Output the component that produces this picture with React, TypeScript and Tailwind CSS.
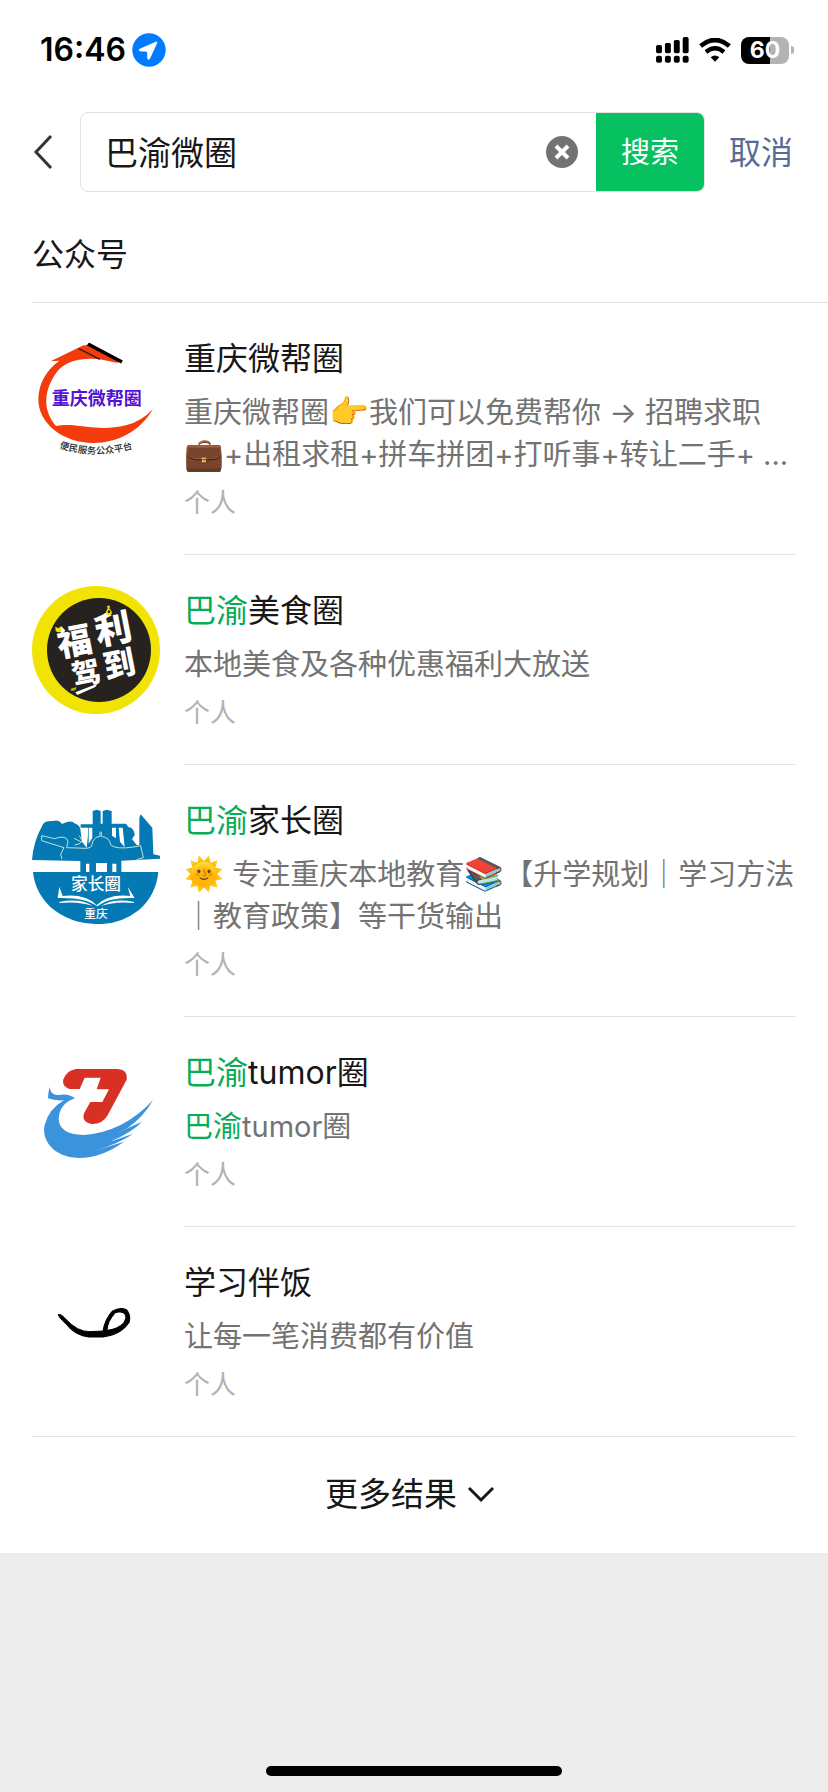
import { useState, type ReactNode } from "react";

function SignalIcon() {
  return (
    <svg viewBox="0 0 100 79" className="w-[33px] h-[26px]" aria-hidden="true">
      <rect x="0" y="24" width="18" height="25" rx="5" />
      <rect x="27" y="18" width="18" height="31" rx="5" />
      <rect x="54" y="9" width="18" height="40" rx="5" />
      <rect x="81" y="0" width="18" height="49" rx="5" />
      <rect x="0" y="57" width="18" height="21" rx="6" />
      <rect x="27" y="57" width="18" height="21" rx="6" />
      <rect x="54" y="57" width="18" height="21" rx="6" />
      <rect x="81" y="57" width="18" height="21" rx="6" />
    </svg>
  );
}

function WifiIcon() {
  return (
    <svg viewBox="0 0 96 72" className="w-8 h-6" aria-hidden="true">
      <path d="M5 24Q48-12 91 24" fill="none" stroke="#000" strokeWidth="14" />
      <path d="M21 42Q48 20 75 42" fill="none" stroke="#000" strokeWidth="13" />
      <path d="M35 58Q48 47 61 58L48 71Z" />
    </svg>
  );
}

function LocationIcon() {
  return (
    <svg viewBox="0 0 102 102" className="w-[34px] h-[34px]" aria-hidden="true">
      <circle cx="51" cy="51" r="50" fill="#007aff" />
      <path
        d="M72 27L22 49Q20 53 24 54L46 55L47 77Q49 82 53 77L75 29Q75 26 72 27Z"
        fill="#fff"
        stroke="#fff"
        strokeWidth="2"
        strokeLinejoin="round"
      />
    </svg>
  );
}

function Battery() {
  return (
    <div className="flex items-center gap-[2px]">
      <div className="flex h-[27px] w-12 items-center justify-center rounded-lg bg-[linear-gradient(90deg,#000_60%,#b3b3b3_60%)] text-[23px] font-bold leading-none text-white">
        60
      </div>
      <div className="h-2 w-[3px] rounded-r-full bg-[#b3b3b3]" />
    </div>
  );
}

function ChongqingHelpLogo() {
  return (
    <svg viewBox="36 42 384 384" className="size-32" aria-hidden="true">
      <path
        d="M92 124L192 75L242 118Q140 108 104 165C66 225 74 278 108 318C170 306 230 338 318 316Q365 304 399 267C360 335 290 369 220 369C128 369 55 310 55 238Q56 168 118 122Z"
        fill="#f43b0b"
      />
      <path d="M192 78L205 72L300 126L290 128L240 118Z" fill="#f43b0b" />
      <path d="M204 72L306 126" stroke="#000" strokeWidth="11" />
      <path d="M176 86L240 118" stroke="#222" strokeWidth="4" />
      <text x="230" y="254" textAnchor="middle" fontSize="54" fontWeight="700" fill="#5412d6">
        重庆微帮圈
      </text>
      <path id="help-arc" d="M118 384Q230 420 345 384" fill="none" />
      <text fontSize="28" fontWeight="500" fill="#222">
        <textPath href="#help-arc">便民服务公众平台</textPath>
      </text>
    </svg>
  );
}

function WelfareLogo() {
  return (
    <svg viewBox="36 33 384 384" className="size-32" aria-hidden="true">
      <circle cx="228" cy="225" r="192" fill="#f1e404" />
      <circle cx="237" cy="225" r="156" fill="#26221f" />
      <g fill="#fff" fontWeight="900" textAnchor="middle">
        <text x="163" y="237" fontSize="104" transform="rotate(-11 163 200)">福</text>
        <text x="280" y="202" fontSize="110" transform="rotate(-11 280 163)">利</text>
        <text x="198" y="325" fontSize="86" transform="rotate(-11 198 293)">驾</text>
        <text x="298" y="302" fontSize="96" transform="rotate(-11 298 268)">到</text>
      </g>
      <path d="M166 352L232 326L226 336L172 360Z" fill="#fff" />
      <path d="M106 155L116 160L124 153L125 168Q116 176 107 168Z" fill="#f1e404" />
      <path d="M261 92H270L268 101Q278 108 275 117Q267 124 258 117Q256 107 263 101Z" fill="#f1e404" />
      <circle cx="267" cy="110" r="4" fill="#26221f" />
      <path d="M152 341L170 336L166 346L154 348Z" fill="#b5b514" />
    </svg>
  );
}

function ParentsLogo() {
  return (
    <svg viewBox="36 3 384 384" className="size-32" aria-hidden="true">
      <g fill="#0579b3">
        <path d="M36 195Q40 140 66 94Q70 76 100 78Q116 72 126 87Q152 72 166 86Q182 90 182 110L186 140L200 158L204 120V98H182V88H218V48L230 44L242 48V86H248V48L260 44L275 48V86H318L325 96Q342 98 344 120L336 132L350 150H358V68L362 58L397 98L400 178L420 182V191L304 197V231H181V198Z" />
        <path d="M39 231H415Q408 300 358 344Q300 390 228 387Q150 386 92 337Q45 292 39 231Z" />
      </g>
      <g fill="#fff">
        <path d="M198 206H208V231H198ZM228 204H261V231H228ZM277 206H289V231H277ZM206 98H217V128L206 146ZM276 98H288V130L276 122ZM296 98H308L314 156L300 140Z" />
        <path d="M118 275L128 303Q198 296 230 331Q264 296 331 303L323 275L344 309Q266 306 232 334Q194 306 113 309Z" />
        <path d="M118 321Q180 308 218 333Q176 318 118 324ZM342 321Q282 308 244 333Q286 318 342 324Z" />
      </g>
      <g fill="none" stroke="#bfe3d6" strokeWidth="3">
        <path d="M126 192L122 178L132 158L65 137V122L104 131Q140 118 144 140L140 158L200 160Q216 158 216 148Q220 126 240 124V110M244 110V124Q270 128 272 150Q290 164 340 156L362 152L370 188L350 194" />
        <path d="M162 130L182 140M164 150Q180 150 186 138M178 122L184 134" />
      </g>
      <text x="228" y="285" textAnchor="middle" fontSize="50" fontWeight="500" fill="#fff">
        家长圈
      </text>
      <text x="228" y="370" textAnchor="middle" fontSize="35" fontWeight="500" fill="#fff">
        重庆
      </text>
    </svg>
  );
}

function TumorLogo() {
  return (
    <svg viewBox="36 9 384 384" className="size-32" aria-hidden="true">
      <path
        d="M168 72H290Q324 72 320 104L262 212Q246 238 216 237Q182 230 193 203L211 171H247L267 133H230L242 98H194L179 132H148Q124 124 130 103Q140 76 168 72Z"
        fill="#d93025"
      />
      <path
        d="M89 126Q92 152 116 150Q146 144 165 160Q118 176 116 222Q118 268 190 270Q310 262 399 165Q372 214 324 248L286 266L366 230Q336 262 270 290L340 266Q300 294 222 318L312 290Q246 338 176 339C98 336 64 284 74 240Q86 192 132 166Q104 168 84 160Q84 142 89 126Z"
        fill="#3b93dc"
      />
    </svg>
  );
}

function StrokeLogo() {
  return (
    <svg viewBox="36 -36 384 384" className="size-32" aria-hidden="true">
      <path
        fillRule="evenodd"
        stroke="#000"
        strokeWidth="3"
        d="M115 133Q124 132 136 146Q172 186 210 185L249 183Q254 150 276 124Q300 110 320 119Q334 136 327 158Q304 194 250 201H206Q164 196 138 162Q114 140 115 133ZM261 181Q262 154 286 128Q304 122 315 132Q322 142 312 158Q292 178 261 181Z"
      />
    </svg>
  );
}

function Match({ children }: { children: ReactNode }) {
  return <em className="not-italic text-[#07ad56]">{children}</em>;
}

function Emoji({ children }: { children: ReactNode }) {
  return <span className="text-[32px] leading-none">{children}</span>;
}

const accounts = [
  {
    id: 1,
    logo: <ChongqingHelpLogo />,
    name: <>重庆微帮圈</>,
    description: (
      <>
        重庆微帮圈<Emoji>👉</Emoji>我们可以免费帮你 → 招聘求职
        <br />
        <Emoji>💼</Emoji>+出租求租+拼车拼团+打听事+转让二手+ ...
      </>
    ),
    owner: "个人",
  },
  {
    id: 2,
    logo: <WelfareLogo />,
    name: <><Match>巴渝</Match>美食圈</>,
    description: <>本地美食及各种优惠福利大放送</>,
    owner: "个人",
  },
  {
    id: 3,
    logo: <ParentsLogo />,
    name: <><Match>巴渝</Match>家长圈</>,
    description: (
      <>
        <Emoji>🌞</Emoji> 专注重庆本地教育<Emoji>📚</Emoji>【升学规划｜学习方法
        <br />
        ｜教育政策】等干货输出
      </>
    ),
    owner: "个人",
  },
  {
    id: 4,
    logo: <TumorLogo />,
    name: <><Match>巴渝</Match>tumor圈</>,
    description: <><Match>巴渝</Match>tumor圈</>,
    owner: "个人",
  },
  {
    id: 5,
    logo: <StrokeLogo />,
    name: <>学习伴饭</>,
    description: <>让每一笔消费都有价值</>,
    owner: "个人",
  },
];

function AccountRow({ account }: { account: (typeof accounts)[0] }) {
  return (
    <li className="group flex gap-6 last:border-b last:border-[#e3e3e3]">
      <div className="shrink-0 pt-[31px]">{account.logo}</div>
      <div className="min-w-0 flex-1 border-b border-[#e3e3e3] pt-[34px] pb-[33px] group-last:border-b-0">
        <h3 className="text-[32px] leading-[44px] text-[#171717]">{account.name}</h3>
        <p className="mt-[11px] text-[29px] leading-[42px] text-[#737373]">{account.description}</p>
        <p className="mt-[9px] text-[26px] leading-9 text-[#b2b2b2]">{account.owner}</p>
      </div>
    </li>
  );
}

export default function App() {
  const [query, setQuery] = useState("巴渝微圈");

  return (
    <div className="flex min-h-screen flex-col bg-[#ededed] font-[Inter,'Noto_Sans_CJK_SC',sans-serif]">
      <div className="bg-white">
        {/* Status bar */}
        <div className="flex h-[100px] items-center justify-between pl-10 pr-[34px]">
          <div className="flex items-center gap-[6px]">
            <span className="text-[32px] font-semibold leading-none">16:46</span>
            <LocationIcon />
          </div>
          <div className="flex items-center gap-[10px]">
            <SignalIcon />
            <WifiIcon />
            <Battery />
          </div>
        </div>

        {/* Search bar */}
        <header className="mt-3 flex items-center pr-[35px]">
          <button type="button" aria-label="返回" className="flex w-20 justify-start pl-8">
            <svg viewBox="0 0 22 36" className="h-9 w-[22px]" fill="none" stroke="#333" strokeWidth="3" aria-hidden="true">
              <path d="M19 2L4 18L19 34" />
            </svg>
          </button>
          <form
            className="flex h-20 min-w-0 flex-1 overflow-hidden rounded-lg border border-[#e3e3e3]"
            onSubmit={(e) => e.preventDefault()}
          >
            <input
              type="text"
              aria-label="搜索"
              value={query}
              onChange={(e) => setQuery(e.target.value)}
              className="min-w-0 flex-1 pl-6 pt-1 text-[33px] text-[#171717] outline-none"
            />
            <button type="button" aria-label="清除" onClick={() => setQuery("")} className="px-[18px]">
              <svg viewBox="0 0 32 32" className="size-8" aria-hidden="true">
                <circle cx="16" cy="16" r="16" fill="#737373" />
                <path d="M10 10L22 22M22 10L10 22" stroke="#fff" strokeWidth="4" />
              </svg>
            </button>
            <button type="submit" className="w-[108px] bg-[#07c160] pt-[2px] text-[29px] text-white">
              搜索
            </button>
          </form>
          <button type="button" className="ml-6 pt-[2px] text-[32px] leading-[44px] text-[#576b95]">
            取消
          </button>
        </header>

        {/* Results */}
        <h2 className="ml-8 border-b border-[#e3e3e3] pt-[41px] pb-[25px] text-[32px] leading-[44px] text-[#171717]">公众号</h2>
        <ul className="px-8">
          {accounts.map((account) => (
            <AccountRow key={account.id} account={account} />
          ))}
        </ul>
        <button type="button" className="flex h-[116px] w-full items-center justify-center gap-[10px] pr-2 text-[33px] text-[#171717]">
          更多结果
          <svg viewBox="0 0 28 18" className="h-[18px] w-7" fill="none" stroke="#171717" strokeWidth="3" aria-hidden="true">
            <path d="M2 2L14 14L26 2" />
          </svg>
        </button>
      </div>

      {/* Home indicator */}
      <div className="mx-auto mt-auto mb-4 h-[10px] w-[296px] rounded-full bg-black" />
    </div>
  );
}
